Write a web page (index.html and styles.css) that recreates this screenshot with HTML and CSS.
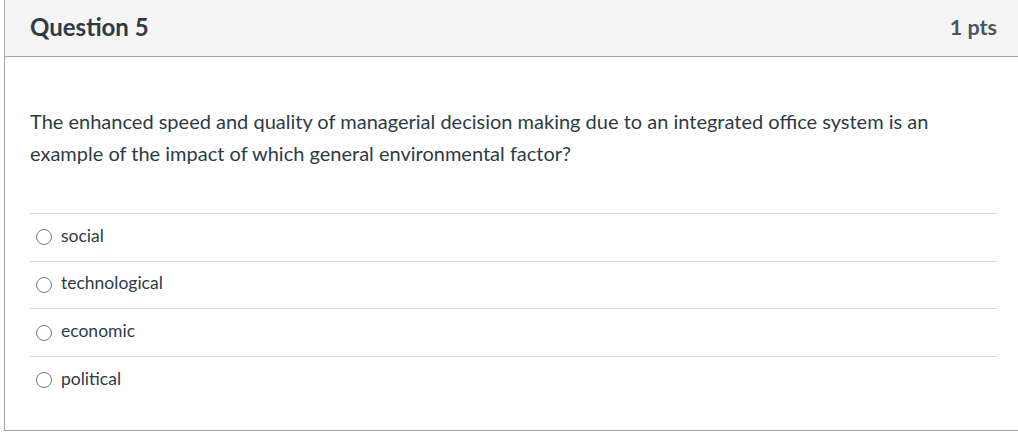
FILE: index.html
```html
<!DOCTYPE html>
<html>
<head>
<meta charset="utf-8">
<link rel="stylesheet" href="styles.css">
</head>
<body>
<div class="question">
  <div class="q-header">
    <span class="q-title">Question 5</span>
    <span class="q-pts">1 pts</span>
  </div>
  <div class="q-body">
    <p class="q-text">The enhanced speed and quality of managerial decision making due to an integrated office system is an example of the impact of which general environmental factor?</p>
    <div class="answers">
      <label class="answer"><span class="radio"></span><span>social</span></label>
      <label class="answer"><span class="radio"></span><span>technological</span></label>
      <label class="answer"><span class="radio"></span><span>economic</span></label>
      <label class="answer"><span class="radio"></span><span>political</span></label>
    </div>
  </div>
</div>
</body>
</html>
```
FILE: styles.css
```css
html, body { margin: 0; padding: 0; background: #fff; }
body { font-family: Lato, "Noto Sans", sans-serif; color: #2d3b45; overflow: hidden; }
.question {
  margin-left: 4px;
  width: 1040px;
  height: 431px;
  box-sizing: border-box;
  border-left: 1px solid #a5a5a5;
  border-bottom: 1px solid #a5a5a5;
}
.q-header {
  height: 57px;
  box-sizing: border-box;
  background: #f5f5f5;
  border-bottom: 1px solid #a5a5a5;
  display: flex;
  align-items: center;
  justify-content: space-between;
  padding: 0 47px 3px 25px;
}
.q-title { font-size: 24px; font-weight: 700; }
.q-pts { font-size: 21.5px; font-weight: 700; color: #4a555e; }
.q-body { padding: 0 47px 0 25px; }
.q-text {
  margin: 48px 0 0;
  font-size: 20px;
  line-height: 32px;
  width: 920px;
}
.answers { margin-top: 44px; }
.answer {
  display: flex;
  align-items: center;
  height: 46.67px;
  box-sizing: content-box;
  border-top: 1px solid #dcdcdc;
  font-size: 17.5px;
  padding-left: 6px;
  gap: 9px;
}
.answer span:last-child { position: relative; top: -2px; }
.radio {
  width: 14px; height: 14px;
  border: 1px solid #777;
  border-radius: 50%;
  background: #fff;
}
```
